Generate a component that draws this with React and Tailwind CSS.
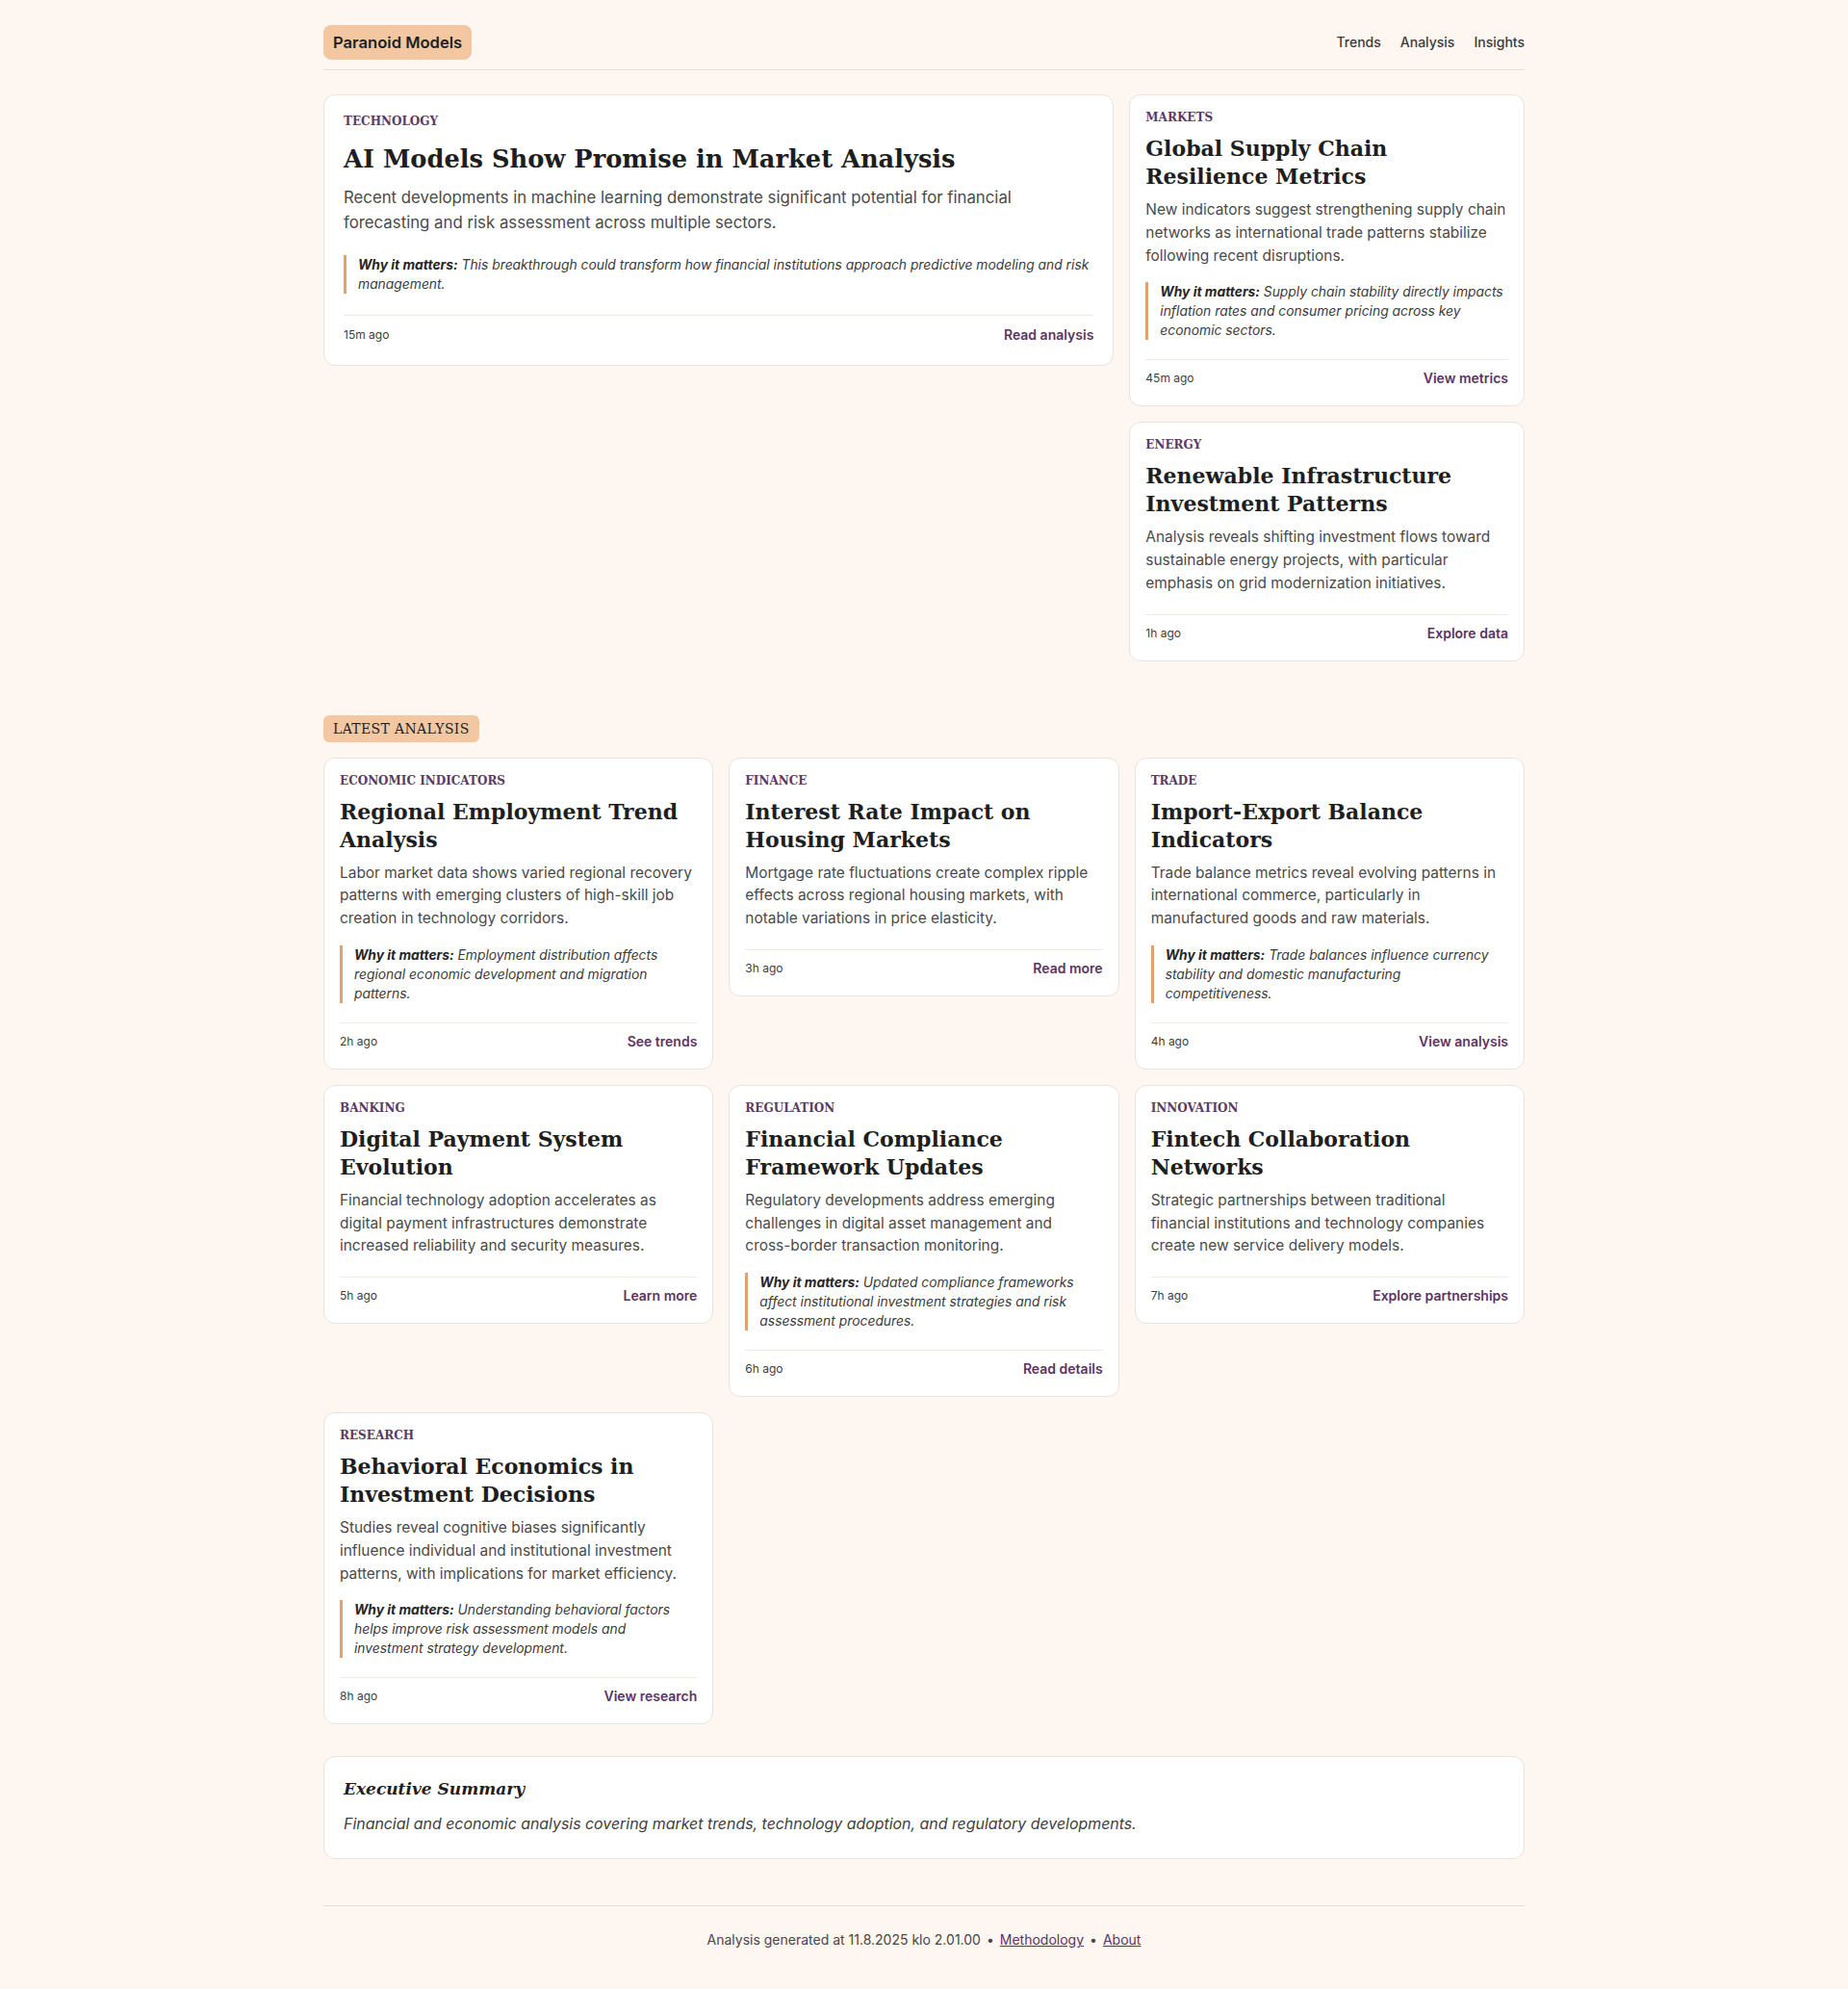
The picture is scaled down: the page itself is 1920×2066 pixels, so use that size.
import React from "react";

const SERIF = { fontFamily: '"DejaVu Serif", "Liberation Serif", serif' };

const featured = {
  cat: "Technology",
  title: "AI Models Show Promise in Market Analysis",
  text: "Recent developments in machine learning demonstrate significant potential for financial forecasting and risk assessment across multiple sectors.",
  why: "This breakthrough could transform how financial institutions approach predictive modeling and risk management.",
  time: "15m ago",
  link: "Read analysis",
};

const side = [
  {
    cat: "Markets",
    title: "Global Supply Chain Resilience Metrics",
    text: "New indicators suggest strengthening supply chain networks as international trade patterns stabilize following recent disruptions.",
    why: "Supply chain stability directly impacts inflation rates and consumer pricing across key economic sectors.",
    time: "45m ago",
    link: "View metrics",
  },
  {
    cat: "Energy",
    title: "Renewable Infrastructure Investment Patterns",
    text: "Analysis reveals shifting investment flows toward sustainable energy projects, with particular emphasis on grid modernization initiatives.",
    time: "1h ago",
    link: "Explore data",
  },
];

const latest = [
  {
    cat: "Economic Indicators",
    title: "Regional Employment Trend Analysis",
    text: "Labor market data shows varied regional recovery patterns with emerging clusters of high-skill job creation in technology corridors.",
    why: "Employment distribution affects regional economic development and migration patterns.",
    time: "2h ago",
    link: "See trends",
  },
  {
    cat: "Finance",
    title: "Interest Rate Impact on Housing Markets",
    text: "Mortgage rate fluctuations create complex ripple effects across regional housing markets, with notable variations in price elasticity.",
    time: "3h ago",
    link: "Read more",
  },
  {
    cat: "Trade",
    title: "Import-Export Balance Indicators",
    text: "Trade balance metrics reveal evolving patterns in international commerce, particularly in manufactured goods and raw materials.",
    why: "Trade balances influence currency stability and domestic manufacturing competitiveness.",
    time: "4h ago",
    link: "View analysis",
  },
  {
    cat: "Banking",
    title: "Digital Payment System Evolution",
    text: "Financial technology adoption accelerates as digital payment infrastructures demonstrate increased reliability and security measures.",
    time: "5h ago",
    link: "Learn more",
  },
  {
    cat: "Regulation",
    title: "Financial Compliance Framework Updates",
    text: (
      <>
        Regulatory developments address emerging challenges in digital asset management and{" "}
        <span className="whitespace-nowrap">cross-border</span> transaction monitoring.
      </>
    ),
    why: "Updated compliance frameworks affect institutional investment strategies and risk assessment procedures.",
    time: "6h ago",
    link: "Read details",
  },
  {
    cat: "Innovation",
    title: "Fintech Collaboration Networks",
    text: "Strategic partnerships between traditional financial institutions and technology companies create new service delivery models.",
    time: "7h ago",
    link: "Explore partnerships",
  },
  {
    cat: "Research",
    title: "Behavioral Economics in Investment Decisions",
    text: "Studies reveal cognitive biases significantly influence individual and institutional investment patterns, with implications for market efficiency.",
    why: "Understanding behavioral factors helps improve risk assessment models and investment strategy development.",
    time: "8h ago",
    link: "View research",
  },
];

function Why({ text, className }) {
  return (
    <div className={"border-l-[3px] border-[#dfa26f] pl-3 text-[13.85px] leading-5 italic text-[#3a3a3a] " + className}>
      <strong className="font-bold text-[#262626]">Why it matters:</strong> {text}
    </div>
  );
}

function Footer({ time, link, className }) {
  return (
    <div className={"flex items-center justify-between border-t border-[#efe9e4] " + className}>
      <span className="text-xs leading-4 text-[#3d3d3d]">{time}</span>
      <a href="#" className="text-sm leading-5 font-semibold text-[#5b3462]">
        {link}
      </a>
    </div>
  );
}

function Label({ children }) {
  return (
    <div style={SERIF} className="text-[12px] leading-3 font-bold uppercase tracking-normal text-[#5b3a63]">
      {children}
    </div>
  );
}

function FeaturedCard({ a }) {
  return (
    <article className="rounded-xl border border-[#ebe2da] bg-white px-5 pt-[21px] pb-[21px]">
      <Label>{a.cat}</Label>
      <h2 style={SERIF} className="mt-[15px] mb-[9px] text-[25.7px] leading-[36px] font-bold text-[#1e1e1e]">
        {a.title}
      </h2>
      <p className="text-[16.8px] leading-[26px] text-[#4a4a4a]">{a.text}</p>
      <Why text={a.why} className="mt-[21px]" />
      <Footer time={a.time} link={a.link} className="mt-[22px] pt-[10px]" />
    </article>
  );
}

function Card({ a }) {
  return (
    <article className="rounded-xl border border-[#ebe2da] bg-white px-4 pt-[17px] pb-[18px]">
      <Label>{a.cat}</Label>
      <h3 style={SERIF} className="mt-3 mb-2 text-[22px] leading-[29px] font-bold text-[#1e1e1e]">
        {a.title}
      </h3>
      <p className="text-[15.45px] leading-[23.75px] text-[#4a4a4a]">{a.text}</p>
      {a.why && <Why text={a.why} className="mt-4" />}
      <Footer time={a.time} link={a.link} className="mt-5 pt-[9px]" />
    </article>
  );
}

export default function App() {
  return (
    <div
      className="min-h-screen bg-[#fdf6f1] text-[#1e1e1e]"
      style={{ fontFamily: 'Inter, "Noto Sans", "Liberation Sans", sans-serif' }}
    >
      <div className="mx-auto max-w-[1280px] px-4">
        <header className="flex items-center justify-between border-b border-[#e9ded5] pt-[26px] pb-[10px]">
          <div className="rounded-lg bg-[#f2c7a1] px-2.5 py-1.5 text-[16.6px] leading-6 font-semibold text-[#1f1f1f]">
            Paranoid Models
          </div>
          <nav className="flex items-center gap-5 text-sm leading-5 font-medium text-[#3b3b3b]">
            <a href="#">Trends</a>
            <a href="#">Analysis</a>
            <a href="#">Insights</a>
          </nav>
        </header>

        <main className="pt-[25px]">
          <section className="grid grid-cols-[2fr_1fr] items-start gap-4">
            <FeaturedCard a={featured} />
            <div className="flex flex-col gap-4">
              {side.map((a) => (
                <Card key={a.title} a={a} />
              ))}
            </div>
          </section>

          <section className="mt-14">
            <div className="mb-4 flex">
              <span
                style={SERIF}
                className="rounded-md bg-[#f2c7a1] px-2.5 py-1 text-[14px] leading-5 uppercase tracking-wide text-[#1f1f1f]"
              >
                Latest Analysis
              </span>
            </div>
            <div className="grid grid-cols-3 items-start gap-4">
              {latest.map((a) => (
                <Card key={a.title} a={a} />
              ))}
            </div>
          </section>

          <section className="mt-[33px] rounded-xl border border-[#ebe2da] bg-white px-5 pt-5 pb-[22px]">
            <h2 style={SERIF} className="mb-2.5 text-[17px] leading-[27px] font-bold italic text-[#1e1e1e]">
              Executive Summary
            </h2>
            <p className="text-[15.9px] leading-[26px] italic text-[#404040]">
              Financial and economic analysis covering market trends, technology adoption, and regulatory developments.
            </p>
          </section>
        </main>

        <footer className="mt-12 border-t border-[#e9ded5] pt-[25px] pb-10 text-center text-sm leading-5 text-[#474747]">
          Analysis generated at 11.8.2025 klo 2.01.00
          <span className="mx-1.5">•</span>
          <a href="#" className="text-[#5b3462] underline">
            Methodology
          </a>
          <span className="mx-1.5">•</span>
          <a href="#" className="text-[#5b3462] underline">
            About
          </a>
        </footer>
      </div>
    </div>
  );
}
